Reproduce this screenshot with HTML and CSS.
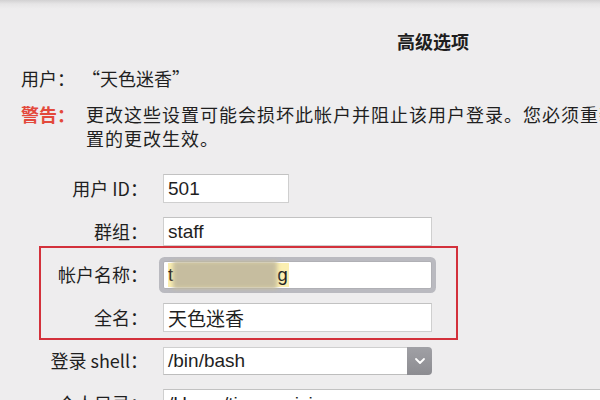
FILE: index.html
```html
<!DOCTYPE html>
<html lang="zh-CN">
<head>
<meta charset="utf-8">
<title>高级选项</title>
<link rel="stylesheet" href="styles.css">
</head>
<body>
<div class="sheet">
  <h1 class="title">高级选项</h1>
  <div class="info">
    <div class="info-label">用户：</div>
    <div class="info-value quoted">“天色迷香”</div>
    <div class="info-label warn">警告：</div>
    <div class="info-value warn-text"><span class="line1">更改这些设置可能会损坏此帐户并阻止该用户登录。您必须重新启动电脑才能使这些设</span><br>置的更改生效。</div>
  </div>
  <div class="form">
    <label class="label">用户 ID：</label>
    <div class="field short">501</div>
    <label class="label">群组：</label>
    <div class="field">staff</div>
    <label class="label">帐户名称：</label>
    <div class="field focused"><span class="hl">t<span class="blur"></span>g</span></div>
    <label class="label">全名：</label>
    <div class="field cjk">天色迷香</div>
    <label class="label">登录 shell：</label>
    <div class="select">
      <span class="select-text">/bin/bash</span>
      <span class="select-btn"><svg width="12" height="8" viewBox="0 0 12 8"><polyline points="2,2 6,6 10,2" fill="none" stroke="#ffffff" stroke-width="1.8" stroke-linecap="round" stroke-linejoin="round"/></svg></span>
    </div>
    <label class="label">个人目录：</label>
    <div class="field wide">/Users/tiansemixiang</div>
  </div>
  <div class="annot"></div>
</div>
</body>
</html>
```
FILE: styles.css
```css
html, body {
  margin: 0;
  padding: 0;
  width: 600px;
  height: 400px;
  overflow: hidden;
}
body {
  background: linear-gradient(#d2d1d2 0px, #e6e5e6 4px, #eeedee 9px);
  font-family: "Liberation Sans", "Noto Sans CJK SC", sans-serif;
  color: #1f1f1f;
}
.cjk {
  font-family: "Noto Sans CJK SC", sans-serif;
}
.sheet {
  position: relative;
  width: 800px;
  height: 400px;
  padding-top: 29px;
  box-sizing: border-box;
}
.title {
  margin: 0 0 0 397px;
  font-family: "Noto Sans CJK SC", sans-serif;
  font-size: 18px;
  line-height: 24px;
  font-weight: bold;
  color: #1e1e1e;
}
.info {
  margin: 13px 0 0 21px;
  display: grid;
  grid-template-columns: 65px auto;
  row-gap: 12px;
  font-family: "Noto Sans CJK SC", sans-serif;
  font-size: 18px;
  line-height: 24px;
}
.info-value {
  white-space: nowrap;
}
.quoted {
  margin-left: -4px;
}
.warn {
  color: #e3493b;
  font-weight: bold;
}
.warn-text {
  letter-spacing: 1px;
}
.form {
  margin-top: 24px;
  display: grid;
  grid-template-columns: 148px auto;
  column-gap: 15px;
  row-gap: 14px;
  grid-auto-rows: 29px;
  align-items: center;
  font-size: 19px;
}
.label {
  text-align: right;
  font-family: "Noto Sans CJK SC", sans-serif;
  font-size: 18px;
  white-space: nowrap;
  line-height: 29px;
}
.field {
  box-sizing: border-box;
  width: 269px;
  height: 29px;
  background: #ffffff;
  border: 1px solid #cfcfcf;
  border-top-color: #c2c2c2;
  padding: 0 4px;
  line-height: 27px;
  white-space: nowrap;
  overflow: hidden;
}
.field.short {
  width: 126px;
}
.field.wide {
  width: 460px;
}
.field.focused {
  height: 28px;
  border-color: #b0b0b5;
  box-shadow: 0 0 0 4px #babac0;
  border-radius: 2px;
  overflow: visible;
}
.hl {
  display: inline-flex;
  align-items: center;
  height: 24px;
  margin-top: 1px;
  background: #fbefb1;
  vertical-align: top;
  line-height: 24px;
  padding: 0 1px 0 0;
}
.blur {
  display: inline-block;
  width: 104px;
  height: 28px;
  background: #c6bd9f;
  filter: blur(2px);
}
.select {
  display: flex;
  width: 269px;
  height: 28px;
  box-sizing: border-box;
}
.select-text {
  flex: 1;
  background: #ffffff;
  border: 1px solid #cfcfcf;
  border-bottom-color: #bdbdbd;
  border-right: none;
  padding: 0 4px;
  line-height: 26px;
}
.select-btn {
  width: 25px;
  display: flex;
  align-items: center;
  justify-content: center;
  background: linear-gradient(#a0a0a5, #8c8c91);
  border-radius: 0 4px 4px 0;
}
.annot {
  position: absolute;
  left: 39px;
  top: 246px;
  width: 419px;
  height: 94px;
  box-sizing: border-box;
  border: 2px solid #d3313b;
}
```
